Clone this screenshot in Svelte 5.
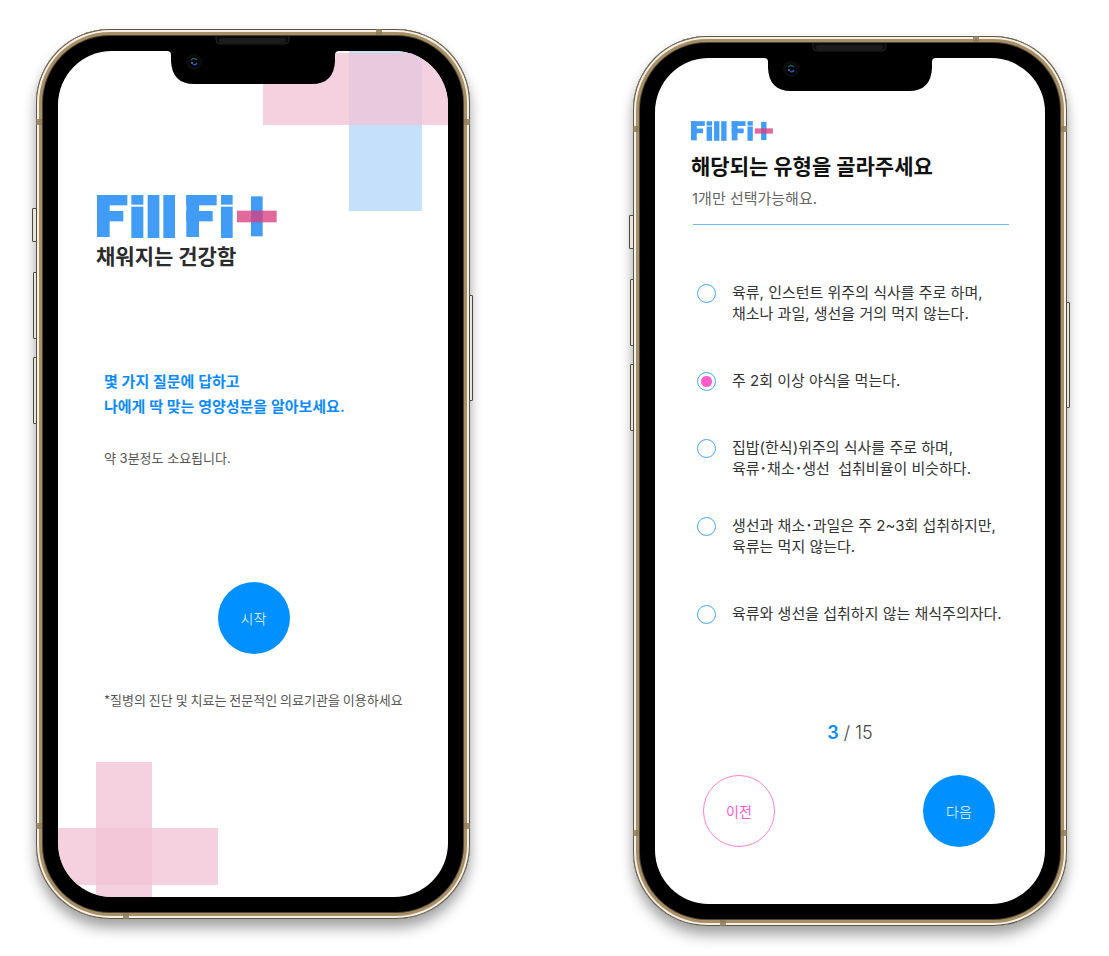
<script>
  const options = [
    { id: 'meat', lines: ['육류, 인스턴트 위주의 식사를 주로 하며,', '채소나 과일, 생선을 거의 먹지 않는다.'] },
    { id: 'night', lines: ['주 2회 이상 야식을 먹는다.'] },
    { id: 'home', lines: ['집밥(한식)위주의 식사를 주로 하며,', '육류･채소･생선\u00a0 섭취비율이 비슷하다.'] },
    { id: 'fish', lines: ['생선과 채소･과일은 주 2~3회 섭취하지만,', '육류는 먹지 않는다.'] },
    { id: 'vegetarian', lines: ['육류와 생선을 섭취하지 않는 채식주의자다.'] }
  ];
  let selected = $state('night');
</script>

{#snippet logo()}
  <svg class="logo" viewBox="0 0 540 129" role="img" aria-label="Fill Fit">
    <g fill="#409cf5" shape-rendering="geometricPrecision">
      <rect x="0" y="0" width="38" height="126" />
      <rect x="0" y="0" width="91" height="31" />
      <rect x="0" y="48" width="79" height="31" />
      <rect x="103" y="0" width="36" height="29" />
      <rect x="103" y="35" width="36" height="94" />
      <rect x="152" y="0" width="35" height="129" />
      <rect x="199" y="0" width="35" height="129" />
      <rect x="268" y="0" width="38" height="126" />
      <rect x="268" y="0" width="91" height="31" />
      <rect x="268" y="48" width="79" height="31" />
      <rect x="372" y="0" width="35" height="29" />
      <rect x="372" y="35" width="35" height="94" />
      <rect x="462" y="4" width="35" height="120" />
    </g>
    <rect x="420" y="47" width="119" height="35" fill="#da3f80" fill-opacity="0.78" />
  </svg>
{/snippet}

{#snippet hardware()}
  <span class="key mute"></span>
  <span class="key up"></span>
  <span class="key down"></span>
  <span class="key power"></span>
  <span class="band left high"></span>
  <span class="band left low"></span>
  <span class="band right high"></span>
  <span class="band right low"></span>
  <span class="band top"></span>
  <span class="band bottom"></span>
  <svg class="notch" viewBox="0 0 174 49" aria-hidden="true">
    <path d="M0 0H174V15H173Q169 15 169 19V25Q168 48 146 48H28Q6 48 5 25V19Q5 15 1 15H0Z" fill="#000" />
    <path d="M50 0V4Q50 8 54 8H119Q123 8 123 4V0" fill="#0b0b0b" stroke="#242424" />
    <rect x="53" y="2" width="67" height="5" rx="2" fill="#1c1c1c" />
    <circle cx="28" cy="26" r="8" fill="#0b0c0e" />
    <circle cx="28" cy="26" r="5" fill="#020307" />
    <path d="M25 24Q28 21 31 24" fill="none" stroke="#16685f" stroke-width="1.5" />
    <path d="M27 28Q29 30 31 27" fill="none" stroke="#3155c8" stroke-width="1.5" />
    <circle cx="26" cy="27" r="1" fill="#8268bb" />
  </svg>
{/snippet}

<main>
  <section class="phone" aria-label="시작 화면">
    <div class="screen intro">
      <div class="shape sky"></div>
      <div class="shape blush-top"></div>
      <div class="shape blush-column"></div>
      <div class="shape blush-row"></div>
      {@render logo()}
      <p class="tagline">채워지는 건강함</p>
      <p class="lead">몇 가지 질문에 답하고<br />나에게 딱 맞는 영양성분을 알아보세요.</p>
      <p class="time">약 3분정도 소요됩니다.</p>
      <button class="round start" type="button">시작</button>
      <p class="notice">*질병의 진단 및 치료는 전문적인 의료기관을 이용하세요</p>
    </div>
    {@render hardware()}
  </section>

  <section class="phone second" aria-label="질문 화면">
    <form class="screen quiz">
      {@render logo()}
      <h1>해당되는 유형을 골라주세요</h1>
      <p class="hint">1개만 선택가능해요.</p>
      <hr />
      <ul>
        {#each options as option}
          <li>
            <input type="radio" name="diet" id={option.id} value={option.id} bind:group={selected} />
            <label for={option.id}>
              {#each option.lines as line}<span>{line}</span>{/each}
            </label>
          </li>
        {/each}
      </ul>
      <p class="count"><b>3</b> / 15</p>
      <div class="actions">
        <button class="round outline" type="button">이전</button>
        <button class="round" type="button">다음</button>
      </div>
    </form>
    {@render hardware()}
  </section>
</main>

<style>
  :global(body) {
    margin: 0;
    background: #fff;
  }

  main {
    display: flex;
    flex-wrap: wrap;
    justify-content: space-between;
    align-items: flex-start;
    padding: 29px 42px 28px 36px;
    font-family: Inter, 'Noto Sans CJK KR', sans-serif;
    color: #333;
  }

  p, h1, ul {
    margin: 0;
    padding: 0;
  }

  .phone {
    position: relative;
    box-sizing: border-box;
    width: 100%;
    max-width: 434px;
    padding: 22px;
    border-radius: 74px;
    background: #000;
    box-shadow:
      inset 0 0 0 1px #5f5746,
      inset 0 0 0 3px #f6f1e4,
      inset 0 0 0 6px #a98f66,
      inset 0 0 0 7px #4b4438,
      0 10px 14px rgba(0, 0, 0, 0.3),
      0 4px 10px rgba(0, 0, 0, 0.1);
  }

  .second {
    margin-top: 7px;
  }

  .screen {
    position: relative;
    display: flex;
    flex-direction: column;
    align-items: flex-start;
    overflow: hidden;
    border-radius: 54px;
    background: #fff;
  }

  .logo {
    position: relative;
    display: block;
  }

  .notch {
    position: absolute;
    top: 7px;
    left: 50%;
    width: 174px;
    height: 49px;
    margin-left: -87px;
  }

  .key {
    position: absolute;
    left: -4px;
    box-sizing: border-box;
    width: 5px;
    border: 1px solid #4c483f;
    border-radius: 1px;
    background: #e9e5da;
  }

  .mute {
    top: 179px;
    height: 34px;
  }

  .up {
    top: 243px;
    left: -3px;
    width: 4px;
    height: 67px;
  }

  .down {
    top: 328px;
    left: -3px;
    width: 4px;
    height: 67px;
  }

  .power {
    top: 266px;
    right: -3px;
    left: auto;
    width: 4px;
    height: 106px;
  }

  .band {
    position: absolute;
    width: 6px;
    height: 6px;
    background: #8f7b5b;
    opacity: 0.85;
  }

  .left { left: 0; }
  .right { right: 0; }
  .high { top: 90px; }
  .low { bottom: 90px; }
  .top { top: 0; right: 88px; }
  .bottom { bottom: 0; left: 87px; }

  .shape {
    position: absolute;
    background: rgba(242, 196, 214, 0.78);
  }

  .sky {
    top: 0;
    right: 26px;
    width: 73px;
    height: 160px;
    background: #c5e0fb;
  }

  .blush-top {
    top: 2px;
    right: 0;
    width: 185px;
    height: 72px;
  }

  .blush-column {
    bottom: 0;
    left: 38px;
    width: 56px;
    height: 135px;
  }

  .blush-row {
    bottom: 12px;
    left: 0;
    width: 160px;
    height: 57px;
  }

  .intro {
    padding: 144px 38px 187px 39px;
  }

  .intro .logo {
    width: 180px;
    height: 43px;
  }

  .tagline {
    margin: 5px 0 0 -1px;
    font-size: 21px;
    font-weight: 700;
    line-height: 28px;
    color: #2b2b2b;
  }

  .lead {
    margin: 98px 0 0 7px;
    font-size: 15px;
    font-weight: 600;
    line-height: 25px;
    color: #0b8bff;
  }

  .time {
    margin: 29px 0 0 7px;
    font-size: 13px;
    line-height: 20px;
    color: #555;
  }

  .round {
    box-sizing: border-box;
    width: 72px;
    height: 72px;
    padding: 0;
    border: 0;
    border-radius: 50%;
    background: #0090ff;
    font-family: 'Noto Sans CJK KR', sans-serif;
    font-size: 14px;
    font-weight: 300;
    line-height: 20px;
    color: #fff;
    cursor: pointer;
  }

  .start {
    align-self: center;
    margin-top: 114px;
  }

  .notice {
    margin: 36px 0 0 7px;
    font-family: 'Noto Sans CJK KR', sans-serif;
    font-size: 13px;
    line-height: 20px;
    color: #555;
  }

  .quiz {
    padding: 63px 36px 57px;
  }

  .quiz .logo {
    width: 82px;
    height: 20px;
  }

  h1 {
    margin-top: 12px;
    font-size: 21px;
    font-weight: 700;
    line-height: 28px;
    color: #111;
  }

  .hint {
    margin: 8px 0 0 1px;
    font-size: 15px;
    font-weight: 400;
    line-height: 20px;
    color: #666;
  }

  hr {
    align-self: stretch;
    margin: 15px 0 0 2px;
    border: 0 solid #6dbcfa;
    border-top-width: 1px;
  }

  ul {
    display: flex;
    flex-direction: column;
    gap: 36px;
    margin: 57px 0 0 6px;
    list-style: none;
  }

  li {
    display: flex;
    gap: 16px;
    padding-bottom: 10px;
  }

  li:nth-child(3) {
    padding-bottom: 0;
  }

  input {
    flex: none;
    box-sizing: border-box;
    width: 19px;
    height: 19px;
    margin: 2px 0 0;
    border: 1px solid #43a7fb;
    border-radius: 50%;
    background: #fff;
    appearance: none;
  }

  input:checked {
    background: radial-gradient(circle, #fd5bcb 5px, #fff 6px);
  }

  label {
    font-size: 15px;
    line-height: 21px;
    white-space: nowrap;
  }

  label span {
    display: block;
  }

  .count {
    align-self: center;
    margin-top: 86px;
    font-size: 18px;
    font-weight: 300;
    line-height: 26px;
    color: #444;
  }

  .count b {
    font-weight: 600;
    color: #0b8bff;
  }

  .actions {
    display: flex;
    align-self: stretch;
    justify-content: space-between;
    margin: 29px 14px 0 12px;
  }

  .outline {
    border: 1px solid #fd80d8;
    background: #fff;
    font-weight: 400;
    color: #fd5bcb;
  }
</style>
